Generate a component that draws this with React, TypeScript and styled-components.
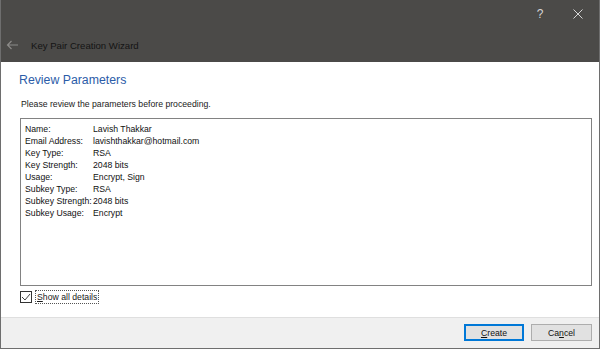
import React from 'react';
import styled, { createGlobalStyle } from 'styled-components';

const GlobalStyle = createGlobalStyle`
    html, body {
        margin: 0;
        padding: 0;
        background: #ffffff;
    }
    * {
        box-sizing: border-box;
    }
`;

const Window = styled.div`
    width: 600px;
    height: 349px;
    display: flex;
    flex-direction: column;
    border: 1px solid #6e6e6e;
    border-top: none;
    font-family: 'Liberation Sans', Arial, sans-serif;
    color: #1a1a1a;
    overflow: hidden;
`;

const TitleBar = styled.div`
    height: 62px;
    flex: none;
    background: #4b4a48;
    display: flex;
    flex-direction: column;
    justify-content: space-between;
    margin: 0 -1px;
`;

const Controls = styled.div`
    display: flex;
    justify-content: flex-end;
    height: 28px;
    padding-right: 3px;
`;

const ControlButton = styled.div`
    width: 38px;
    display: flex;
    align-items: center;
    justify-content: center;
    color: #d6d6d6;
    font-size: 12px;
`;

const HeaderRow = styled.div`
    display: flex;
    align-items: center;
    height: 20px;
    margin-bottom: 7px;
    padding-left: 6px;
`;

const BackArrow = styled.div`
    width: 13px;
    height: 10px;
    margin-right: 12px;
    display: flex;
`;

const WizardTitle = styled.div`
    font-size: 9.6px;
    color: #141414;
`;

const Content = styled.div`
    flex: 1;
    background: #ffffff;
    padding: 10px 7px 0 19px;
    display: flex;
    flex-direction: column;
`;

const Heading = styled.div`
    font-size: 12.3px;
    line-height: 16px;
    color: #2b5ca8;
    margin-left: -1px;
`;

const Intro = styled.div`
    font-size: 8.7px;
    line-height: 12px;
    margin-top: 10px;
    margin-left: 1px;
`;

const ListBox = styled.div`
    margin-top: 8px;
    height: 168px;
    border: 1px solid #828282;
    padding: 4px 4px;
    font-size: 8.7px;
    line-height: 12px;
    color: #111111;
`;

const Row = styled.div`
    display: grid;
    grid-template-columns: 68px 1fr;
    white-space: nowrap;
`;

const CheckRow = styled.label`
    display: flex;
    align-items: center;
    gap: 3px;
    margin-top: 4px;
    font-size: 8.7px;
`;

const CheckBox = styled.div`
    width: 12px;
    height: 12px;
    border: 1px solid #333333;
    background: #ffffff;
    display: flex;
    align-items: center;
    justify-content: center;
`;

const FocusLabel = styled.span`
    border: 1px dotted #555555;
    padding: 1px 1px;
    line-height: 10px;
`;

const Footer = styled.div`
    height: 31px;
    flex: none;
    background: #f0f0f0;
    border-top: 1px solid #dfdfdf;
    display: flex;
    justify-content: flex-end;
    align-items: center;
    gap: 7px;
    padding-right: 7px;
    padding-bottom: 1px;
`;

const Button = styled.div<{ $primary?: boolean }>`
    width: ${p => (p.$primary ? 60 : 61)}px;
    height: 17px;
    background: #e1e1e1;
    border: 1px solid ${p => (p.$primary ? '#0078d7' : '#adadad')};
    box-shadow: ${p => (p.$primary ? 'inset 0 0 0 1px #0078d7' : 'none')};
    display: flex;
    align-items: center;
    justify-content: center;
    font-size: 8.7px;
    color: #111111;
`;

const params: [string, string][] = [
    ['Name:', 'Lavish Thakkar'],
    ['Email Address:', 'lavishthakkar@hotmail.com'],
    ['Key Type:', 'RSA'],
    ['Key Strength:', '2048 bits'],
    ['Usage:', 'Encrypt, Sign'],
    ['Subkey Type:', 'RSA'],
    ['Subkey Strength:', '2048 bits'],
    ['Subkey Usage:', 'Encrypt'],
];

const App: React.FC = () => {
    return (
        <>
            <GlobalStyle />
            <Window>
                <TitleBar>
                    <Controls>
                        <ControlButton>?</ControlButton>
                        <ControlButton>
                            <svg width="10" height="10" viewBox="0 0 10 10">
                                <path d="M0.5 0.5 L9.5 9.5 M9.5 0.5 L0.5 9.5" stroke="#d6d6d6" strokeWidth="1" />
                            </svg>
                        </ControlButton>
                    </Controls>
                    <HeaderRow>
                        <BackArrow>
                            <svg width="13" height="10" viewBox="0 0 13 10">
                                <path d="M12 5 H1.5 M5.5 1 L1.5 5 L5.5 9" stroke="#8c8b89" strokeWidth="1.2" fill="none" />
                            </svg>
                        </BackArrow>
                        <WizardTitle>Key Pair Creation Wizard</WizardTitle>
                    </HeaderRow>
                </TitleBar>
                <Content>
                    <Heading>Review Parameters</Heading>
                    <Intro>Please review the parameters before proceeding.</Intro>
                    <ListBox>
                        {params.map(([label, value]) => (
                            <Row key={label}>
                                <span>{label}</span>
                                <span>{value}</span>
                            </Row>
                        ))}
                    </ListBox>
                    <CheckRow>
                        <CheckBox>
                            <svg width="10" height="10" viewBox="0 0 10 10">
                                <path d="M1 5 L4 8 L9 2" stroke="#444444" strokeWidth="1" fill="none" />
                            </svg>
                        </CheckBox>
                        <FocusLabel>
                            <u>S</u>how all details
                        </FocusLabel>
                    </CheckRow>
                </Content>
                <Footer>
                    <Button $primary>
                        <span><u>C</u>reate</span>
                    </Button>
                    <Button>
                        <span>Ca<u>n</u>cel</span>
                    </Button>
                </Footer>
            </Window>
        </>
    );
};

export default App;
